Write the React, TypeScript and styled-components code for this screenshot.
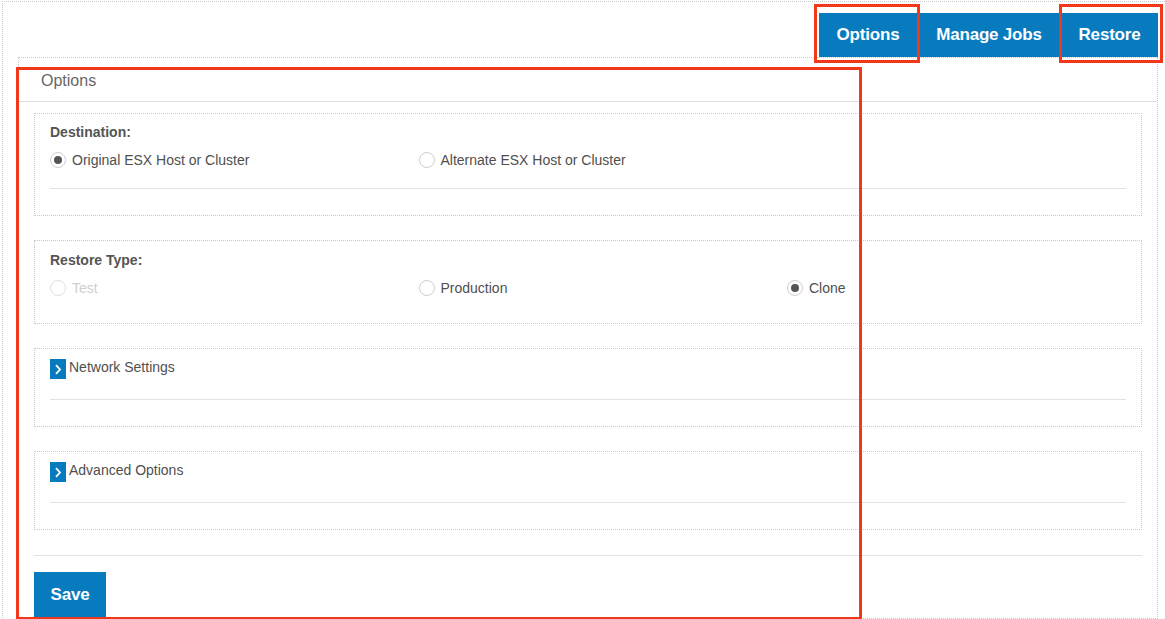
import React from "react";
import styled, { createGlobalStyle } from "styled-components";

const GlobalStyle = createGlobalStyle`
  html, body {
    margin: 0;
    padding: 0;
    background: #fff;
    overflow: hidden;
    font-family: "Liberation Sans", Arial, sans-serif;
  }
`;

const BLUE = "#087bbf";
const DOTTED = "1px dotted #c9c9c9";

const Page = styled.div`
  position: relative;
  width: 1165px;
  height: 619px;
`;

const Frame = styled.div`
  margin: 1px 0 0 2px;
  border-top: ${DOTTED};
  border-left: ${DOTTED};
  height: 640px;
`;

const Toolbar = styled.div`
  display: flex;
  justify-content: flex-end;
  padding: 11px 7px 0 0;
`;

const TabButton = styled.button<{ $w: number }>`
  width: ${(p) => p.$w}px;
  height: 44px;
  padding: 0;
  border: 0;
  background: ${BLUE};
  color: #fff;
  font-family: "Liberation Sans", Arial, sans-serif;
  font-size: 17px;
  font-weight: bold;
  letter-spacing: -0.2px;
  cursor: pointer;
`;

const Panel = styled.div`
  margin: 0 7px 0 15px;
  border: ${DOTTED};
`;

const PanelHeader = styled.div`
  height: 44px;
  box-sizing: border-box;
  display: flex;
  align-items: center;
  padding: 3px 0 0 22px;
  border-bottom: 1px solid #dedede;
  font-size: 16px;
  color: #666;
`;

const PanelBody = styled.div`
  padding: 11px 15px 0;
  display: flex;
  flex-direction: column;
  gap: 24px;
`;

const Section = styled.div<{ $top: number; $bottom: number }>`
  border: ${DOTTED};
  padding: ${(p) => p.$top}px 15px ${(p) => p.$bottom}px;
`;

const SectionTitle = styled.div`
  font-size: 14px;
  line-height: 18px;
  font-weight: bold;
  color: #555;
`;

const RadioRow = styled.div`
  display: grid;
  grid-template-columns: repeat(3, 368.5px);
  margin-top: 9px;
`;

const RadioOption = styled.label<{ $disabled?: boolean }>`
  display: flex;
  align-items: center;
  gap: 6px;
  height: 20px;
  font-size: 14px;
  color: ${(p) => (p.$disabled ? "#cfcfcf" : "#4f4f4f")};
`;

const RadioCircle = styled.span<{ $checked?: boolean; $disabled?: boolean }>`
  width: 14px;
  height: 14px;
  border-radius: 50%;
  border: 1px solid ${(p) => (p.$disabled ? "#e0e0e0" : "#cfcfcf")};
  display: flex;
  align-items: center;
  justify-content: center;
  &::after {
    content: "";
    width: 8px;
    height: 8px;
    border-radius: 50%;
    background: ${(p) => (p.$checked ? "#555" : "transparent")};
  }
`;

const Separator = styled.div<{ $top: number }>`
  margin-top: ${(p) => p.$top}px;
  height: 1px;
  background: #e2e2e2;
`;

const Toggle = styled.div`
  display: flex;
  align-items: flex-start;
  gap: 3px;
  height: 20px;
  font-size: 14px;
  line-height: 16px;
  color: #4f4f4f;
`;

const ToggleIcon = styled.span`
  width: 16px;
  height: 20px;
  background: ${BLUE};
  display: flex;
  align-items: center;
  justify-content: center;
`;

const Footer = styled.div`
  margin-top: 1px;
  border-top: 1px solid #e2e2e2;
  padding-top: 16px;
`;

const SaveButton = styled(TabButton)`
  height: 46px;
`;

const Annotation = styled.div<{ $x: number; $y: number; $w: number; $h: number }>`
  position: absolute;
  left: ${(p) => p.$x}px;
  top: ${(p) => p.$y}px;
  width: ${(p) => p.$w}px;
  height: ${(p) => p.$h}px;
  border: 3px solid #f2381b;
  box-sizing: border-box;
  pointer-events: none;
`;

interface RadioProps {
  label: string;
  checked?: boolean;
  disabled?: boolean;
}

function Radio({ label, checked, disabled }: RadioProps) {
  return (
    <RadioOption $disabled={disabled}>
      <RadioCircle $checked={checked} $disabled={disabled} />
      {label}
    </RadioOption>
  );
}

function Chevron() {
  return (
    <svg width="8" height="11" viewBox="0 0 8 11">
      <path d="M2 1.2 L6 5.5 L2 9.8" fill="none" stroke="#fff" strokeWidth="1.8" />
    </svg>
  );
}

export default function App() {
  return (
    <>
      <GlobalStyle />
      <Page>
        <Frame>
          <Toolbar>
            <TabButton $w={98}>Options</TabButton>
            <TabButton $w={144}>Manage Jobs</TabButton>
            <TabButton $w={97}>Restore</TabButton>
          </Toolbar>
          <Panel>
            <PanelHeader>Options</PanelHeader>
            <PanelBody>
              <Section $top={9} $bottom={26}>
                <SectionTitle>Destination:</SectionTitle>
                <RadioRow>
                  <Radio label="Original ESX Host or Cluster" checked />
                  <Radio label="Alternate ESX Host or Cluster" />
                </RadioRow>
                <Separator $top={18} />
              </Section>
              <Section $top={10} $bottom={25}>
                <SectionTitle>Restore Type:</SectionTitle>
                <RadioRow>
                  <Radio label="Test" disabled />
                  <Radio label="Production" />
                  <Radio label="Clone" checked />
                </RadioRow>
              </Section>
              <Section $top={10} $bottom={26}>
                <Toggle>
                  <ToggleIcon>
                    <Chevron />
                  </ToggleIcon>
                  Network Settings
                </Toggle>
                <Separator $top={20} />
              </Section>
              <Section $top={10} $bottom={26}>
                <Toggle>
                  <ToggleIcon>
                    <Chevron />
                  </ToggleIcon>
                  Advanced Options
                </Toggle>
                <Separator $top={20} />
              </Section>
              <Footer>
                <SaveButton $w={72}>Save</SaveButton>
              </Footer>
            </PanelBody>
          </Panel>
        </Frame>
        <Annotation $x={814} $y={3} $w={106} $h={59} />
        <Annotation $x={1059} $y={3} $w={104} $h={59} />
        <Annotation $x={16} $y={66} $w={846} $h={553} />
      </Page>
    </>
  );
}
